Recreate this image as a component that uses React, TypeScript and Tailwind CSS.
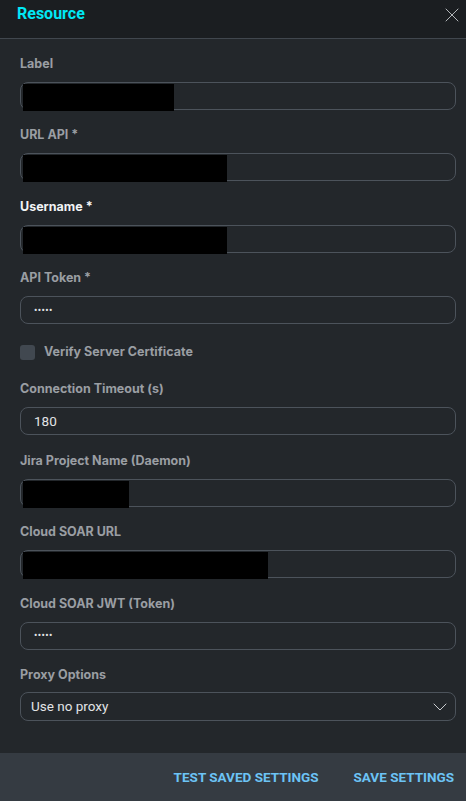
import { ChevronDown, X } from "lucide-react";

interface Field {
    label: string;
    value?: string;
    secret?: boolean;
    redact?: number;
    active?: boolean;
}

const fieldsTop: Field[] = [
    { label: "Label", redact: 151 },
    { label: "URL API *", redact: 204 },
    { label: "Username *", redact: 204, active: true },
    { label: "API Token *", value: "•••••", secret: true },
];

const fieldsBottom: Field[] = [
    { label: "Connection Timeout (s)", value: "180" },
    { label: "Jira Project Name (Daemon)", redact: 106 },
    { label: "Cloud SOAR URL", redact: 245 },
    { label: "Cloud SOAR JWT (Token)", value: "•••••", secret: true },
];

const labelCls = "text-[12.5px] leading-4 font-bold font-['Inter','Liberation_Sans',sans-serif]";

const FieldRow = ({ field }: { field: Field }) => {
    return (
        <div className="flex flex-col">
            <label className={`${labelCls} ${field.active ? "text-[#f1f3f5]" : "text-[#9a9ea3]"}`}>
                {field.label}
            </label>
            <div className="relative mt-[10px] h-[28px] rounded-[8px] border border-[#4c535b] bg-[#23272b] flex items-center px-[13px]">
                {field.value && (
                    <span
                        className={`text-[#e2e4e6] ${field.secret ? "text-[10px] tracking-[0.4px]" : "text-[13.5px]"}`}
                    >
                        {field.value}
                    </span>
                )}
                {field.redact && (
                    // redacted value
                    <div
                        className="absolute left-[2px] top-[1px] -bottom-[2px] bg-black"
                        style={{ width: field.redact }}
                    ></div>
                )}
            </div>
        </div>
    );
};

const App = () => {
    return (
        <div className="w-[466px] h-[801px] flex flex-col bg-[#23272b] font-['Roboto','Liberation_Sans',sans-serif] overflow-hidden">
            {/* Header */}
            <div className="h-[39px] shrink-0 flex items-start justify-between pl-[17px] pr-[2.5px] pt-[2px] bg-[#1b1e21] border-b border-[#41474e]">
                <h2 className="text-[16px] leading-6 font-bold text-[#00e8f5]">Resource</h2>
                <X className="w-[24px] h-[24px] text-[#c4c7cb] mt-[0.5px]" strokeWidth={0.9} />
            </div>

            {/* Form */}
            <div className="flex-1 pl-[20px] pr-[10px] pt-[16.5px] flex flex-col">
                <div className="flex flex-col gap-[17.5px]">
                    {fieldsTop.map((f, i) => (
                        <FieldRow key={i} field={f} />
                    ))}
                </div>

                <div className="flex items-center gap-[9px] mt-[20px]">
                    <div className="w-[15px] h-[15px] rounded-[3px] bg-[#414850]"></div>
                    <span className={`${labelCls} text-[#9a9ea3]`}>Verify Server Certificate</span>
                </div>

                <div className="flex flex-col gap-[17.5px] mt-[21px]">
                    {fieldsBottom.map((f, i) => (
                        <FieldRow key={i} field={f} />
                    ))}
                    <div className="flex flex-col">
                        <label className={`${labelCls} text-[#9a9ea3]`}>Proxy Options</label>
                        <div className="mt-[9px] h-[29px] rounded-[8px] border border-[#4c535b] flex items-center justify-between pl-[10px] pr-[3px]">
                            <span className="text-[13.5px] text-[#e2e4e6] -mt-[1px]">Use no proxy</span>
                            <ChevronDown className="w-[24px] h-[24px] text-[#c9ccd0]" strokeWidth={1} />
                        </div>
                    </div>
                </div>
            </div>

            {/* Footer */}
            <div className="h-[48px] shrink-0 bg-[#353b42] flex items-center justify-end gap-[35px] pr-[12px]">
                <button className="text-[13.5px] font-bold text-[#6cc3f5]">TEST SAVED SETTINGS</button>
                <button className="text-[13.5px] font-bold text-[#6cc3f5]">SAVE SETTINGS</button>
            </div>
        </div>
    );
};

export default App;
